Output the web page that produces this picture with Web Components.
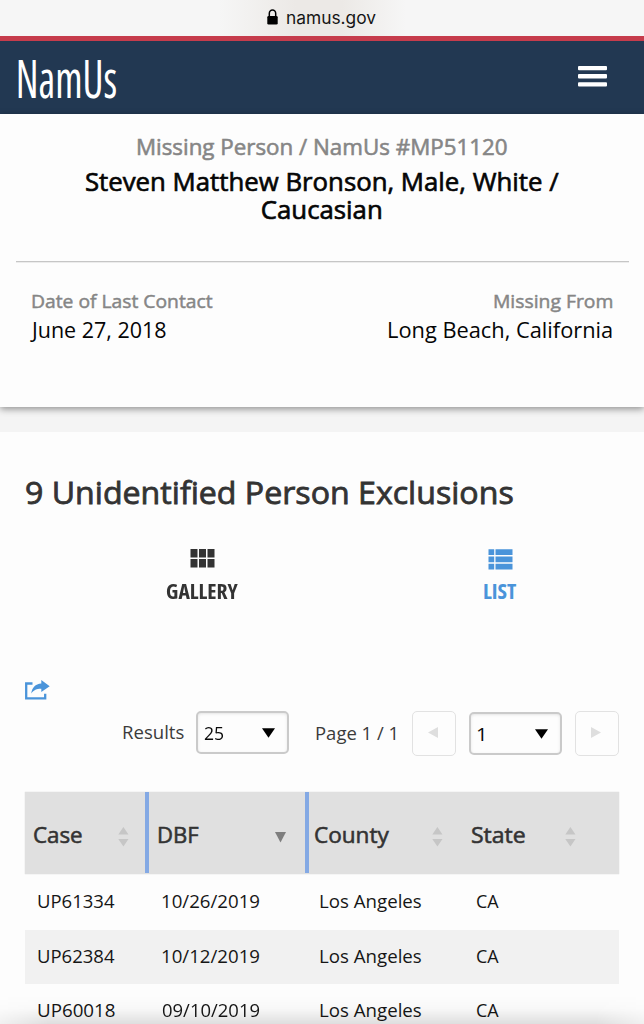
<!DOCTYPE html>
<html lang="en"><head><meta charset="utf-8"><title>NamUs</title>
<style>html,body{margin:0;background:#fdfdfd}body{width:644px;height:1024px;overflow:hidden;font-family:"Open Sans",sans-serif;color:#1b1b1b}</style></head>
<body><case-page></case-page>
<script>
const define=(name,html,after)=>{const t=document.createElement('template');t.innerHTML=html;
customElements.define(name,class extends HTMLElement{connectedCallback(){if(this.shadowRoot)return;this.attachShadow({mode:'open'}).append(t.content.cloneNode(true));if(after)after.call(this,this.shadowRoot)}})};

// Type set to a given ink measure; "|" breaks the line, and the first line sets the measure.
define('type-line',`<style>:host{display:block;flex:none;white-space:nowrap}:host([medium]) span{-webkit-text-stroke:.026em currentColor}span{display:inline-block;transform-origin:0 50%;white-space:pre;text-align:center}</style><span></span>`,function(r){
 const a=(n,d)=>this.getAttribute(n)||d,s=r.querySelector('span');
 const fs=+a('size','18'),wt=a('weight','400'),face=a('face','Open Sans'),w=+a('w','0'),lh=+a('lh','24'),cond=this.hasAttribute('cond');
 const lines=a('text','').split('|');
 s.textContent=lines.join('\n');
 s.style.cssText=`font:${wt} ${fs}px/${lh}px "${face}",sans-serif;`+(cond?'font-stretch:75%;':'');
 this.style.height=lh*lines.length+'px';this.style.width=w+'px';
 const c=document.createElement('canvas').getContext('2d');c.font=`${wt} ${fs}px "${face}"`;if(cond)c.fontStretch='condensed';
 const m=c.measureText(lines[0]),ratio=s.offsetWidth?s.getBoundingClientRect().width/m.width:1;
 const left=-m.actualBoundingBoxLeft*ratio,ink=(m.actualBoundingBoxRight+m.actualBoundingBoxLeft)*ratio,k=w/ink;
 s.style.transform=`translateX(${-left*k}px) scaleX(${k})`;
});

define('browser-bar',`<style>:host{display:flex;box-sizing:border-box;height:36px;padding:5px 0 0 267px;background:linear-gradient(90deg,#f6f6f6 0 34%,#ece9e6 46%,#ece9e6 53%,#f6f6f6 63%)}svg{margin:4px 8px 0 0}</style>
<svg width="11" height="16" viewBox="0 0 11 16"><path d="M2.3 8V4.5a3.2 3.5 0 0 1 6.4 0V8" fill="none" stroke="#000" stroke-width="1.5"/><rect x=".3" y="7" width="10.4" height="8.5" rx="1.3"/></svg>
<type-line text="namus.gov" face="Inter" size="17" w="89.5" lh="24" style="color:#151515;margin:1px 0 0 .5px"></type-line>`);

define('site-header',`<style>:host{display:flex;box-sizing:border-box;height:78px;border-top:5px solid #c63c4c;background:#223852;padding:4px 37px 0 18px;justify-content:space-between;color:#fff}svg{margin-top:21px}</style>
<type-line text="NamUs" size="53.5" weight="400" cond w="98.5" lh="66"></type-line>
<svg width="29" height="21" viewBox="0 0 29 21" fill="#fff"><rect width="29" height="4.3" rx="1"/><rect y="8.1" width="29" height="4.3" rx="1"/><rect y="16.2" width="29" height="4.3" rx="1"/></svg>`);

define('case-summary',`<style>:host{display:flex;flex-direction:column;align-items:center;box-sizing:border-box;height:293px;padding-top:18px;background:#fdfdfd;box-shadow:0 2px 7px rgba(0,0,0,.42);color:#050505;position:relative}
hr{width:613px;height:1px;border:0;background:#c6c6c6;margin:38px 0 25.5px;border-bottom:1px solid #ececec}.g{color:#868686}.row{display:flex;align-self:stretch;justify-content:space-between;padding:0 32px 0 31.5px}.r type-line{margin-left:auto}</style>
<type-line class="g" medium text="Missing Person / NamUs #MP51120" size="22" w="369" lh="28"></type-line>
<type-line medium text="Steven Matthew Bronson, Male, White /|Caucasian" size="24.8" w="472.5" lh="28" style="margin-top:7px"></type-line>
<hr><div class="row"><div><type-line class="g" medium text="Date of Last Contact" size="18.7" w="181" lh="24"></type-line><type-line text="June 27, 2018" size="22" w="136" lh="32" style="margin-left:-2px"></type-line></div>
<div class="r"><type-line class="g" medium text="Missing From" size="18.7" w="118" lh="24"></type-line><type-line text="Long Beach, California" size="22" w="223" lh="32"></type-line></div></div>`);

define('view-tab',`<style>:host{display:flex;flex-direction:column;align-items:center;width:297.5px}slot{display:block;height:21px}</style><slot></slot><div></div>`,function(r){
 r.querySelector('div').innerHTML=`<type-line text="${this.getAttribute('label')}" size="21.8" weight="${this.getAttribute('weight')}" cond w="${this.getAttribute('w')}" lh="28" style="margin-top:7px"></type-line>`});

define('select-box',`<style>:host{display:flex;box-sizing:border-box;width:93px;height:43.5px;border:2px solid #cacaca;border-radius:5px;background:#fdfdfd;box-shadow:inset 0 1px 3px #e4e4e4;padding:7px 12px 0 6px;justify-content:space-between;color:#0a0a0a}svg{margin-top:8px}</style><slot></slot><svg width="13" height="10"><path d="M0 .3h13L6.5 9.7z"/></svg>`);
define('page-button',`<style>:host{display:flex;align-items:center;justify-content:center;box-sizing:border-box;width:44px;height:45px;border:1.5px solid #e2e2e2;border-radius:5px;padding:0 2px 2px 0}:host([next]) svg{transform:scaleX(-1)}</style><svg width="10" height="11"><path d="M0 5.5 10 0v11z" fill="#dedede"/></svg>`);

define('result-tools',`<style>:host{display:flex;align-items:flex-start;height:46px;padding:0 25px 0 123px;color:#3b3b3b}type-line{margin-top:9px}select-box type-line{margin:0}</style>
<type-line text="Results" size="18.5" w="60.5" lh="24"></type-line>
<select-box style="margin-left:12.5px"><type-line text="25" size="18.7" w="19.5" lh="26"></type-line></select-box>
<type-line text="Page 1 / 1" size="18.5" w="79.5" lh="24" style="margin:10px 17px 0 26.5px"></type-line><page-button></page-button>
<select-box style="margin:1px 13px 0 12.5px"><type-line text="1" size="18.7" w="6.5" lh="26"></type-line></select-box><page-button next></page-button>`);

define('head-cell',`<style>:host{display:flex;box-sizing:border-box;height:82px;padding-top:29px;position:relative}svg{position:absolute;top:35px}:host([bar])::before{content:"";position:absolute;left:-4px;top:0;width:4px;height:81px;background:#84a9e4}</style><div></div>`,function(r){
 const g=n=>this.getAttribute(n),x=g('icon');
 r.querySelector('div').innerHTML=`<type-line medium text="${g('label')}" size="21.6" w="${g('w')}" lh="28"></type-line><svg style="left:${x}px" width="11" height="20">${this.hasAttribute('sorted')?'<path d="M0 5h11L5.5 15.5z" fill="#7e7e7e"/>':'<path d="M.3 7.5h10.2L5.4 0zM.3 12h10.2L5.4 19.5z" fill="#c6c6c6"/>'}</svg>`});

define('results-table',`<style>:host{display:block;margin-left:25px;width:594px}.head,.row{display:grid;grid-template-columns:124px 160px 157px 153px}.head{height:82px;background:#e0e0e0;color:#333;box-shadow:0 0 1px #cfcfcf}.row{box-sizing:border-box;height:54.5px;padding-top:14px;color:#161616}.row>:nth-child(1){margin-left:13px}.row>:nth-child(2){margin-left:13px}.row>:nth-child(3){margin-left:11px}.row>:nth-child(4){margin-left:11px}.alt{background:#f1f1f1}</style>
<div class="head"><head-cell label="Case" w="47.5" icon="93" style="padding-left:8.5px"></head-cell><head-cell bar label="DBF" w="39.5" icon="126" sorted style="padding-left:10px"></head-cell><head-cell bar label="County" w="74" icon="123" style="padding-left:6px"></head-cell><head-cell label="State" w="52.5" icon="98.5" style="padding-left:6px"></head-cell></div><div id="rows"></div>`,function(r){
 r.getElementById('rows').innerHTML=[['UP61334','10/26/2019'],['UP62384','10/12/2019'],['UP60018','09/10/2019']].map((d,i)=>`<div class="row ${i==1?'alt':''}" style="${i?'':'height:56px;padding-top:15px'}">${[[d[0],77],[d[1],97.5],['Los Angeles',101],['CA',22]].map(([t,w])=>`<type-line text="${t}" size="18.4" w="${w}" lh="24"></type-line>`).join('')}</div>`).join('')});

define('case-page',`<style>:host{display:block;position:relative;width:644px;height:1024px;overflow:hidden;background:#f4f4f4}main{box-sizing:border-box;margin:25px 0 0;height:592px;background:#fdfdfd}.in{padding-top:40px;color:#333}.tabs{display:flex;margin:36.5px 0 0 55px;height:56px}.share{display:block;margin:75px 0 0 25px}result-tools{margin-top:11px}results-table{margin-top:35px}.fade{position:absolute;left:-12px;right:-12px;bottom:0;height:28px;background:linear-gradient(transparent,rgba(0,0,0,.02) 45%,rgba(0,0,0,.12));pointer-events:none;-webkit-mask-image:linear-gradient(90deg,rgba(0,0,0,.25),#000 9%,#000 91%,rgba(0,0,0,.25))}</style>
<browser-bar></browser-bar><site-header></site-header><case-summary></case-summary>
<main><div class="in"><type-line medium text="9 Unidentified Person Exclusions" size="30.8" w="487" lh="40" style="margin-left:26px"></type-line>
<div class="tabs"><view-tab label="GALLERY" weight="700" w="72.5"><svg width="25" height="19" viewBox="0 0 25 19" fill="#333"><path d="M.5 0h7v8.5h-7zM9 0h7v8.5H9zM17.5 0h7v8.5h-7zM.5 10h7v8.5h-7zM9 10h7v8.5H9zM17.5 10h7v8.5h-7z"/></svg></view-tab>
<view-tab label="LIST" weight="700" w="33" style="color:#4a94da;margin-left:-.5px;position:relative;left:3.5px"><svg width="25" height="21" viewBox="0 0 25 21" fill="#4a94da"><path d="M.5.3h5.7v5.7H.5zM7.5.3h17v5.7h-17zM.5 7.5h5.7v5.7H.5zM7.5 7.5h17v5.7h-17zM.5 14.7h5.7v5.8H.5zM7.5 14.7h17v5.8h-17z"/></svg></view-tab></div>
<svg class="share" width="25" height="20" viewBox="0 0 25 20"><path d="M7.5 3.5H1.2v14.8h19v-4.5" fill="none" stroke="#4a94da" stroke-width="2.3"/><path d="M16.3 0 24.7 6.2 16.3 12V8.7C11.8 8.6 9 9.8 6.2 13.5 7 7.6 10.3 3.7 16.3 3.4z" fill="#4a94da"/></svg>
<result-tools></result-tools><results-table></results-table></div></main><div class="fade"></div>`);
</script></body></html>
